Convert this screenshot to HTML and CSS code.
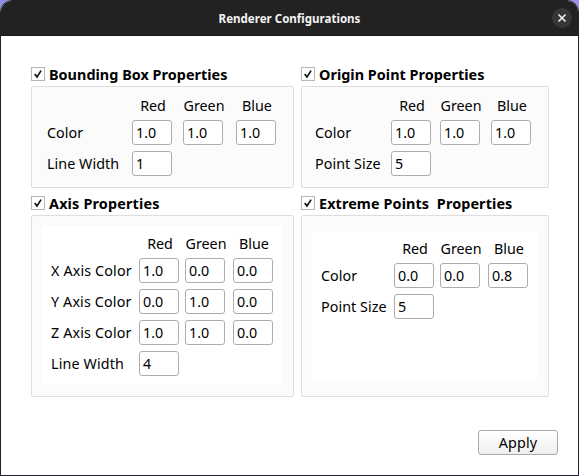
FILE: index.html
```html
<!DOCTYPE html>
<html lang="en">
<head>
<meta charset="utf-8">
<title>Renderer Configurations</title>
<link rel="stylesheet" href="styles.css">
</head>
<body>
<div class="window">
  <header class="titlebar">
    <h1>Renderer Configurations</h1>
    <button class="close" aria-label="Close"><svg viewBox="0 0 20 20" width="20" height="20"><path d="M6.5 6.5l7 7M13.5 6.5l-7 7"/></svg></button>
  </header>
  <main class="groups">
    <section class="group bounding">
      <h2><svg class="check" viewBox="0 0 14 14"><path d="M3.2 7.1L5.8 10.5L10.6 3.1"/></svg><span>Bounding Box Properties</span></h2>
      <div class="frame"><div class="fields">
        <b class="red">Red</b><b>Green</b><b>Blue</b>
        <label>Color</label><i>1.0</i><i>1.0</i><i>1.0</i>
        <label>Line Width</label><i>1</i>
      </div></div>
    </section>
    <section class="group origin">
      <h2><svg class="check" viewBox="0 0 14 14"><path d="M3.2 7.1L5.8 10.5L10.6 3.1"/></svg><span>Origin Point Properties</span></h2>
      <div class="frame"><div class="fields">
        <b class="red">Red</b><b>Green</b><b>Blue</b>
        <label>Color</label><i>1.0</i><i>1.0</i><i>1.0</i>
        <label>Point Size</label><i>5</i>
      </div></div>
    </section>
    <section class="group axis">
      <h2><svg class="check" viewBox="0 0 14 14"><path d="M3.2 7.1L5.8 10.5L10.6 3.1"/></svg><span>Axis Properties</span></h2>
      <div class="frame"><div class="fields">
        <b class="red">Red</b><b>Green</b><b>Blue</b>
        <label>X Axis Color</label><i>1.0</i><i>0.0</i><i>0.0</i>
        <label>Y Axis Color</label><i>0.0</i><i>1.0</i><i>0.0</i>
        <label>Z Axis Color</label><i>1.0</i><i>1.0</i><i>0.0</i>
        <label>Line Width</label><i>4</i>
      </div></div>
    </section>
    <section class="group extreme">
      <h2><svg class="check" viewBox="0 0 14 14"><path d="M3.2 7.1L5.8 10.5L10.6 3.1"/></svg><span>Extreme Points&nbsp; Properties</span></h2>
      <div class="frame"><div class="fields">
        <b class="red">Red</b><b>Green</b><b>Blue</b>
        <label>Color</label><i>0.0</i><i>0.0</i><i>0.8</i>
        <label>Point Size</label><i>5</i>
      </div></div>
    </section>
  </main>
  <footer><button class="apply">Apply</button></footer>
</div>
</body>
</html>
```
FILE: styles.css
```css
* { box-sizing: border-box; }

body {
  margin: 0;
  background: linear-gradient(90deg, #8f8fdc, #9a94e8);
  color: #000;
  font: 14.3px/20px "Noto Sans", "Open Sans", sans-serif;
}

.window {
  display: flex;
  flex-direction: column;
  width: 579px;
  height: 476px;
  overflow: hidden;
  border: 1px solid #24212e;
  border-radius: 12px 12px 0 0;
  background: #fff;
}

.titlebar {
  display: grid;
  grid-template-columns: 1fr 20px 6px;
  align-items: center;
  height: 35px;
  flex: none;
  background: #222;
  border-bottom: 1px solid #161616;
}

.titlebar h1 {
  margin: 0 0 0 26px;
  padding-top: 2px;
  color: #f2f2f2;
  font-size: 11.55px;
  font-weight: 700;
  text-align: center;
}

.close {
  display: block;
  width: 20px;
  height: 20px;
  padding: 0;
  border: 0;
  border-radius: 50%;
  background: #373737;
}

.close svg { display: block; fill: none; stroke: #f5f5f5; stroke-width: 1.5; }

.groups {
  display: grid;
  grid-template-columns: 263px 248px;
  grid-template-rows: 122px 202px;
  gap: 7px;
  padding: 30px 0 0 30px;
}

.group { display: flex; flex-direction: column; }

.group h2 {
  display: flex;
  align-items: center;
  gap: 4px;
  height: 16px;
  margin: 0 0 4px;
  font-size: 14.4px;
  font-weight: 700;
  letter-spacing: 0.03px;
  white-space: nowrap;
}

.group h2 span { padding-top: 2px; }
.axis h2 { letter-spacing: 0.17px; }
.extreme h2 { letter-spacing: 0.1px; }

.check {
  width: 14px;
  height: 14px;
  border: 1px solid #b6b6b6;
  background: #fff;
  fill: none;
  stroke: #111;
  stroke-width: 1.9;
}

.frame {
  flex: 1;
  border: 1px solid #dedede;
  border-radius: 2px;
  background: #fbfbfb;
}

.fields {
  display: grid;
  grid-auto-rows: 25px;
  row-gap: 6px;
  align-items: center;
}

.fields b {
  display: flex;
  justify-content: center;
  width: 42px;
  padding-top: 5px;
  font-weight: 400;
}

.red { grid-column: 2; }
.fields label { grid-column: 1; letter-spacing: 0.06px; white-space: nowrap; }

.fields i {
  width: 40px;
  height: 25px;
  padding: 2px 3px;
  border: 1px solid #adadad;
  border-radius: 3px;
  background: #fff;
  font-style: normal;
}

.bounding .fields { grid-template: 21px / 85px 51px 53px 40px; padding: 6px 0 0 15px; }
.origin .fields { grid-template: 21px / 76px 49px 51px 40px; padding: 6px 0 0 13px; }

.axis .fields, .extreme .fields { background: #fff; align-content: start; }
.axis .fields { grid-template: 21px / 88px 46px 48px 40px; width: 240px; height: 159px; margin: 10px; padding: 5px 0 0 9px; }
.extreme .fields { grid-template: 21px / 73px 46px 48px 40px; width: 225px; height: 149px; margin: 15px 10px; padding: 5px 0 0 9px; }
.axis label { letter-spacing: 0.15px; }

footer { display: flex; justify-content: flex-end; padding: 33px 20px 0 0; }

.apply {
  width: 80px;
  height: 25px;
  padding: 0;
  border: 1px solid #aaa;
  border-radius: 3px;
  background: linear-gradient(#fff, #efefef);
  color: #000;
  font: inherit;
  letter-spacing: 0.2px;
}
```
